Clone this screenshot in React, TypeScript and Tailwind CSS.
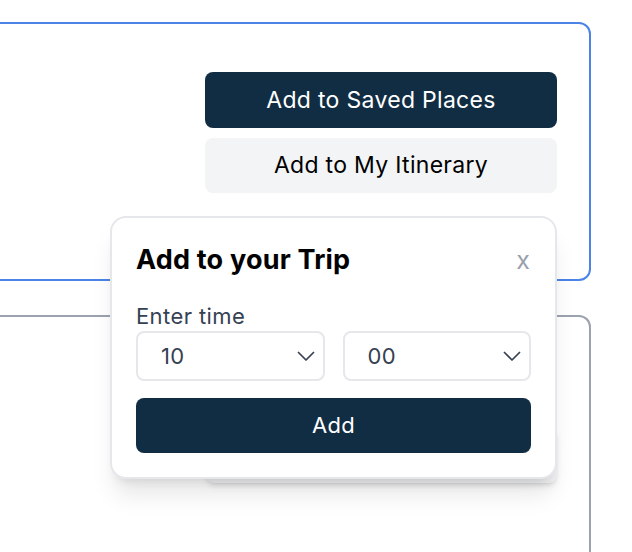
import 'react';

const Chevron = () => (
  <svg width="18" height="18" viewBox="0 0 18 18" fill="none" className="text-gray-700">
    <path d="M1.5 5.5l7.5 7.5 7.5-7.5" stroke="currentColor" strokeWidth="1.75" strokeLinecap="round" strokeLinejoin="round" />
  </svg>
);

const TimeSelect = ({ value }: { value: string }) => (
  <div className="flex-1 h-[50px] rounded-lg border-2 border-gray-200 bg-white flex items-center justify-between pl-[23px] pr-[8px] text-[22px] tracking-[0.3px] text-gray-700">
    <span>{value}</span>
    <Chevron />
  </div>
);

const App = () => {
  return (
    <div
      className="bg-white w-[632px] h-[552px] overflow-hidden pr-[41px] pt-[22px]"
      style={{ fontFamily: 'Inter, "Noto Sans", sans-serif' }}
    >
      {/* Place card */}
      <div className="-ml-[40px] h-[259px] rounded-r-xl border-2 border-[#4b84e6] pt-[48px] pr-[32px] flex flex-col items-end">
        <div className="relative w-[352px] flex flex-col gap-[10px]">
          <button className="h-[56px] rounded-lg bg-[#112d43] text-white text-[23px] tracking-[0.3px]">
            Add to Saved Places
          </button>
          <button className="h-[55px] rounded-lg bg-gray-100 text-black text-[23px] tracking-[0.3px]">
            Add to My Itinerary
          </button>

          {/* Popover */}
          <div className="absolute right-0 top-[144px] z-10 w-[447px] rounded-2xl border-2 border-gray-200 bg-white shadow-xl px-[24px] pt-[26px] pb-[24px]">
            <div className="flex items-center justify-between">
              <h3 className="text-[27px] leading-[32px] font-bold tracking-[0.2px] text-black">Add to your Trip</h3>
              <span className="text-[25px] leading-[32px] text-gray-400 mr-[1px]">x</span>
            </div>
            <p className="mt-[26px] text-[22px] leading-[28px] tracking-[0.4px] text-gray-700">Enter time</p>
            <div className="mt-[1px] flex gap-[18px]">
              <TimeSelect value="10" />
              <TimeSelect value="00" />
            </div>
            <button className="mt-[17px] w-full h-[55px] rounded-lg bg-[#112d43] text-white text-[22px] tracking-[0.3px]">
              Add
            </button>
          </div>
        </div>
      </div>

      {/* Next card */}
      <div className="-ml-[40px] mt-[34px] h-[300px] rounded-tr-xl border-t-2 border-r-2 border-[#9ca3af] pt-[110px] pr-[32px] flex flex-col items-end">
        <div className="w-[351px] h-[56px] rounded-lg bg-gray-100 shadow-md" />
      </div>
    </div>
  );
};

export default App;
